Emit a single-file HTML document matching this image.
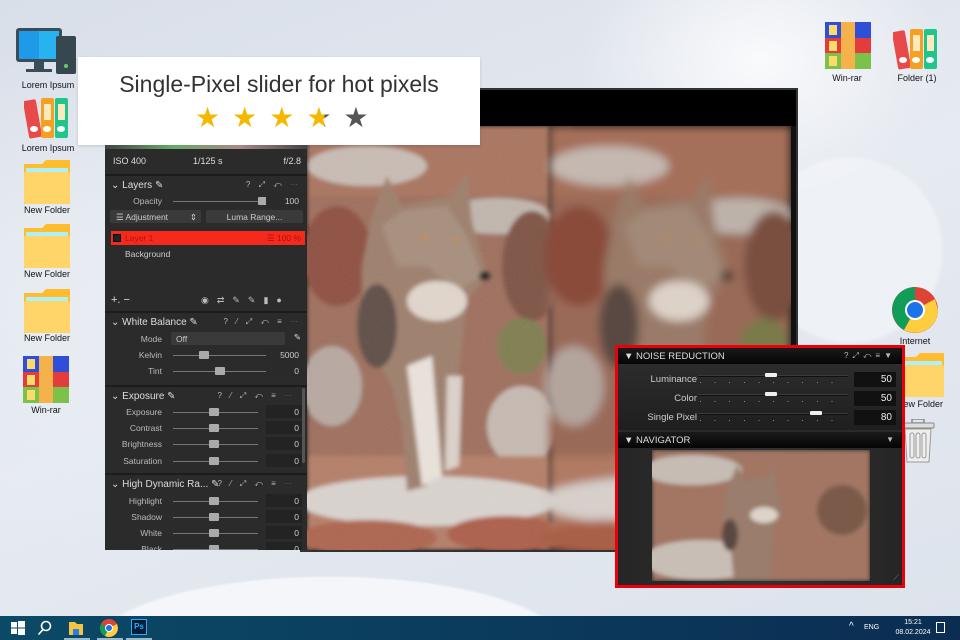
<!DOCTYPE html>
<html><head><meta charset="utf-8"><style>
*{margin:0;padding:0;box-sizing:border-box}
body{width:960px;height:640px;overflow:hidden;position:relative;font-family:"Liberation Sans",sans-serif;background:#e3e8f0}
.a{position:absolute}
.bg{left:0;top:0;width:960px;height:616px;background:
radial-gradient(ellipse 260px 200px at 760px 60px,rgba(255,255,255,.8),rgba(255,255,255,0) 70%),
radial-gradient(circle 95px at 850px 250px,#eef1f6 95%,rgba(0,0,0,0) 100%),
radial-gradient(ellipse 260px 80px at 330px 650px,#f4f6fa 90%,rgba(0,0,0,0) 93%),
radial-gradient(ellipse 300px 250px at 100px 300px,#e9edf3,rgba(0,0,0,0)),
linear-gradient(160deg,#d9dfe9,#e6eaf1 50%,#dde3ec)}
.lbl{font-size:9px;color:#111;text-align:center;width:80px}
.panel{left:105px;top:90px;width:202px;height:460px;background:#2b2b2b;color:#ccc;font-size:8.5px}
.hd{position:absolute;left:0;width:202px;height:18px;border-top:2px solid #1c1c1c;font-size:10px;color:#ddd;padding:4px 0 0 6px}
.hd .ic{position:absolute;right:6px;top:4px;font-size:8px;color:#bbb;letter-spacing:3px}
.row{position:absolute;left:0;width:202px;height:14px}
.row .l{position:absolute;right:145px;top:2px;text-align:right;color:#bbb}
.row .tr{position:absolute;left:68px;width:88px;top:7px;height:1px;background:#777}
.row .kn{position:absolute;top:3px;width:10px;height:8px;background:#aaa;border-radius:1px}
.row .v{position:absolute;right:5px;top:0;width:36px;height:13px;background:#232323;text-align:right;padding:2px 3px 0 0;color:#ccc}
.nr{font-size:9px;color:#ddd}
.nr .row2{position:absolute;left:0;width:284px;height:18px}
.nr .l{position:absolute;right:205px;top:3px;font-size:9.5px;color:#ccc}
.nr .tr{position:absolute;left:80px;width:150px;top:4px;height:2px;background:#3a3a3a;border-bottom:1px solid #111}
.nr .dots{position:absolute;left:82px;width:146px;top:11px;height:1px;background:repeating-linear-gradient(90deg,#888 0 1px,transparent 1px 14.6px)}
.nr .kn{position:absolute;top:2px;width:12px;height:4px;background:#eee;border-radius:1px}
.nr .v{position:absolute;right:6px;top:1px;width:42px;height:15px;background:#111;text-align:right;padding:2px 4px 0 0;font-size:10px;color:#eee}
</style></head><body>
<div class="a bg"></div>

<!-- left desktop icons -->
<svg class="a" style="left:16px;top:26px" width="62" height="52" viewBox="0 0 62 52"><rect x="0" y="2" width="46" height="34" rx="3" fill="#3a4d57"/><rect x="3" y="5" width="40" height="28" fill="#1e9ae8"/><rect x="23" y="5" width="20" height="28" fill="#27b3f0"/><rect x="18" y="36" width="10" height="8" fill="#3a4d57"/><rect x="10" y="43" width="26" height="3" fill="#3a4d57"/><rect x="40" y="10" width="20" height="38" rx="2" fill="#37474f"/><circle cx="50" cy="40" r="2" fill="#6c6"/></svg>
<div class="a lbl" style="left:8px;top:80px">Lorem Ipsum</div>
<svg class="a" style="left:24px;top:96px" width="48" height="44" viewBox="0 0 48 44"><rect x="2" y="4" width="13" height="38" rx="2" fill="#e84a4a" transform="rotate(-10 8 23)"/><rect x="17" y="2" width="13" height="40" rx="2" fill="#f5a020"/><rect x="31" y="2" width="13" height="40" rx="2" fill="#1fc58a"/><rect x="20" y="8" width="7" height="16" fill="#fde8c0"/><rect x="34" y="8" width="7" height="16" fill="#fde8c0"/><ellipse cx="23" cy="33" rx="4" ry="3" fill="#fff"/><ellipse cx="37" cy="33" rx="4" ry="3" fill="#fff"/><ellipse cx="10" cy="33" rx="4" ry="3" fill="#fff"/></svg>
<div class="a lbl" style="left:8px;top:143px">Lorem Ipsum</div>
<svg class="a" style="left:24px;top:160px" width="46" height="44" viewBox="0 0 46 44"><path d="M0 4h18l4 -4h24v44H0z" fill="#ffbd2e"/><rect x="2" y="8" width="42" height="6" fill="#aef0f5"/><rect x="0" y="12" width="46" height="32" rx="2" fill="#ffd56a"/></svg>
<div class="a lbl" style="left:7px;top:205px">New Folder</div>
<svg class="a" style="left:24px;top:224px" width="46" height="44" viewBox="0 0 46 44"><path d="M0 4h18l4 -4h24v44H0z" fill="#ffbd2e"/><rect x="2" y="8" width="42" height="6" fill="#aef0f5"/><rect x="0" y="12" width="46" height="32" rx="2" fill="#ffd56a"/></svg>
<div class="a lbl" style="left:7px;top:269px">New Folder</div>
<svg class="a" style="left:24px;top:289px" width="46" height="44" viewBox="0 0 46 44"><path d="M0 4h18l4 -4h24v44H0z" fill="#ffbd2e"/><rect x="2" y="8" width="42" height="6" fill="#aef0f5"/><rect x="0" y="12" width="46" height="32" rx="2" fill="#ffd56a"/></svg>
<div class="a lbl" style="left:7px;top:333px">New Folder</div>
<svg class="a" style="left:23px;top:356px" width="46" height="47" viewBox="0 0 46 47"><rect width="46" height="16" fill="#2f4fd8"/><rect y="16" width="46" height="15" fill="#e23c3c"/><rect y="31" width="46" height="16" fill="#7cc24a"/><rect x="16" width="14" height="47" fill="#f5b24a"/><rect x="4" y="3" width="8" height="10" fill="#fddb6a"/><rect x="4" y="19" width="8" height="10" fill="#fddb6a"/><rect x="4" y="34" width="8" height="10" fill="#fddb6a"/></svg>
<div class="a lbl" style="left:6px;top:405px">Win-rar</div>

<!-- right desktop icons -->
<svg class="a" style="left:825px;top:22px" width="46" height="47" viewBox="0 0 46 47"><rect width="46" height="16" fill="#2f4fd8"/><rect y="16" width="46" height="15" fill="#e23c3c"/><rect y="31" width="46" height="16" fill="#7cc24a"/><rect x="16" width="14" height="47" fill="#f5b24a"/><rect x="4" y="3" width="8" height="10" fill="#fddb6a"/><rect x="4" y="19" width="8" height="10" fill="#fddb6a"/><rect x="4" y="34" width="8" height="10" fill="#fddb6a"/></svg>
<div class="a lbl" style="left:807px;top:73px">Win-rar</div>
<svg class="a" style="left:893px;top:27px" width="48" height="44" viewBox="0 0 48 44"><rect x="2" y="4" width="13" height="38" rx="2" fill="#e84a4a" transform="rotate(-10 8 23)"/><rect x="17" y="2" width="13" height="40" rx="2" fill="#f5a020"/><rect x="31" y="2" width="13" height="40" rx="2" fill="#1fc58a"/><rect x="20" y="8" width="7" height="16" fill="#fde8c0"/><rect x="34" y="8" width="7" height="16" fill="#fde8c0"/><ellipse cx="23" cy="33" rx="4" ry="3" fill="#fff"/><ellipse cx="37" cy="33" rx="4" ry="3" fill="#fff"/><ellipse cx="10" cy="33" rx="4" ry="3" fill="#fff"/></svg>
<div class="a lbl" style="left:877px;top:73px">Folder (1)</div>
<svg class="a" style="left:892px;top:287px" width="46" height="46" viewBox="-23 -23 46 46"><circle r="23" fill="#db4437"/><path d="M0 0L-20 -11A23 23 0 0 0 -11 20Z" fill="#0f9d58"/><path d="M0 0L-11 20A23 23 0 0 0 23 0L20 -11Z" fill="#ffcd40"/><path d="M0 -23A23 23 0 0 0 -20 -11L0 0Z" fill="#0f9d58"/><circle r="10" fill="#fff"/><circle r="8" fill="#1a73e8"/></svg>
<div class="a lbl" style="left:875px;top:336px">Internet</div>
<svg class="a" style="left:898px;top:353px" width="46" height="44" viewBox="0 0 46 44"><path d="M0 4h18l4 -4h24v44H0z" fill="#ffbd2e"/><rect x="2" y="8" width="42" height="6" fill="#aef0f5"/><rect x="0" y="12" width="46" height="32" rx="2" fill="#ffd56a"/></svg>
<div class="a lbl" style="left:880px;top:399px">New Folder</div>
<svg class="a" style="left:901px;top:419px" width="34" height="44" viewBox="0 0 34 44"><rect x="11" y="0" width="12" height="4" fill="none" stroke="#888" stroke-width="1.5"/><rect x="1" y="4" width="32" height="5" rx="1" fill="#ddd" stroke="#888"/><path d="M4 10h26l-2 33H6z" fill="#eee" stroke="#999"/><rect x="9" y="14" width="4" height="25" rx="2" fill="none" stroke="#999"/><rect x="15" y="14" width="4" height="25" rx="2" fill="none" stroke="#999"/><rect x="21" y="14" width="4" height="25" rx="2" fill="none" stroke="#999"/></svg>

<!-- photo window -->
<div class="a" style="left:300px;top:88px;width:498px;height:464px;background:#111;border:2px solid #333"></div>
<div class="a" style="left:480px;top:90px;width:316px;height:36px;background:#000"></div>
<svg class="a" style="left:307px;top:126px" width="484" height="424" viewBox="0 0 484 424">
<defs>
<filter id="b1"><feGaussianBlur stdDeviation="2"/></filter>
<filter id="b2"><feGaussianBlur stdDeviation="4.5"/></filter>
<filter id="n"><feTurbulence type="fractalNoise" baseFrequency="0.9" numOctaves="1"/><feColorMatrix values="0 0 0 0 1  0 0 0 0 1  0 0 0 0 1  0 0 0 0.12 0"/></filter>
<g id="scene">
<rect width="242" height="424" fill="#9a6a58"/>
<rect y="0" width="242" height="70" fill="#a5705a"/>
<ellipse cx="60" cy="40" rx="60" ry="20" fill="#c4b8b0"/>
<ellipse cx="190" cy="90" rx="55" ry="18" fill="#bdb2aa"/>
<ellipse cx="30" cy="130" rx="35" ry="50" fill="#8a4c3a"/>
<ellipse cx="225" cy="140" rx="30" ry="55" fill="#7a5040"/>
<ellipse cx="215" cy="220" rx="25" ry="28" fill="#7a7a4c"/>
<ellipse cx="25" cy="260" rx="30" ry="40" fill="#b3a49c"/>
<ellipse cx="215" cy="300" rx="35" ry="40" fill="#c2b6ae"/>
<rect y="330" width="242" height="94" fill="#b07a64"/>
<ellipse cx="120" cy="375" rx="130" ry="25" fill="#d6cfca"/>
<ellipse cx="60" cy="412" rx="70" ry="18" fill="#a9604a"/>
<ellipse cx="200" cy="408" rx="60" ry="18" fill="#a85a45"/>
<path d="M65 90 L80 50 L95 80 L145 70 L160 45 L165 95 L180 150 L160 175 L150 260 L150 340 L135 350 L130 290 L115 300 L120 360 L100 365 L95 300 L85 260 L55 210 L55 140 Z" fill="#9a7a68"/>
<path d="M75 100 L95 85 L140 80 L160 110 L175 150 L150 165 L120 140 L90 140 Z" fill="#a38a78"/>
<ellipse cx="130" cy="175" rx="30" ry="20" fill="#ddd2c8"/>
<ellipse cx="70" cy="200" rx="20" ry="42" fill="#5a4a42"/>
<path d="M100 240 L125 230 L135 350 L115 360 Z" fill="#e6dfd8"/>
<path d="M140 250 L155 250 L152 340 L138 345 Z" fill="#d8cec6"/>
<ellipse cx="178" cy="150" rx="6" ry="5" fill="#222"/>
<circle cx="118" cy="112" r="2.5" fill="#c80"/><circle cx="148" cy="114" r="2" fill="#c80"/>
</g>
</defs>
<use href="#scene" filter="url(#b1)"/>
<rect width="242" height="424" filter="url(#n)"/>
<g transform="translate(242,0)"><use href="#scene" filter="url(#b2)"/></g>
</svg>

<!-- label box -->
<div class="a" style="left:78px;top:57px;width:402px;height:88px;background:#fff;box-shadow:0 1px 3px rgba(0,0,0,.15)"></div>
<div class="a" style="left:78px;top:71px;width:402px;text-align:center;font-size:23px;color:#333">Single-Pixel slider for hot pixels</div>
<div class="a" style="left:195px;top:103px;font-size:28px;letter-spacing:12px;color:#f5b800;line-height:30px">★★★<span style="background:linear-gradient(90deg,#f5b800 50%,#555 50%);-webkit-background-clip:text;color:transparent">★</span><span style="color:#555">★</span></div>

<!-- left panel -->
<div class="a panel" style="top:145px;height:405px">
<div class="a" style="left:0;top:0;width:202px;height:4px;background:linear-gradient(90deg,#444,#6a6,#a88,#444)"></div>
<div class="a" style="left:8px;top:11px;font-size:9px;color:#ddd">ISO 400</div>
<div class="a" style="left:88px;top:11px;font-size:9px;color:#ddd">1/125 s</div>
<div class="a" style="right:6px;top:11px;font-size:9px;color:#ddd">f/2.8</div>
<div class="hd" style="top:29px">⌄ Layers ✎<span class="ic">? ⤢ ↶ ⋯</span></div>
<div class="row" style="top:49px"><span class="l">Opacity</span><div class="tr" style="width:95px"></div><div class="kn" style="left:153px"></div><div class="v" style="background:#2a2a2a">100</div></div>
<div class="a" style="left:5px;top:65px;width:91px;height:13px;background:#3a3a3a;border-radius:2px;color:#ccc;padding:2px 0 0 6px">☰ Adjustment <span style="float:right;margin-right:4px">⇕</span></div>
<div class="a" style="left:101px;top:65px;width:97px;height:13px;background:#3a3a3a;border-radius:2px;color:#ccc;text-align:center;padding-top:2px">Luma Range...</div>
<div class="a" style="left:6px;top:86px;width:194px;height:14px;background:#f62a1c;color:#b11;padding:2px 0 0 14px">Layer 1<span style="position:absolute;right:4px;top:2px;color:#a11">☰ 100 %</span></div>
<div class="a" style="left:8px;top:89px;width:8px;height:8px;background:#222;border:1px solid #000"></div>
<div class="a" style="left:20px;top:104px;color:#ccc">Background</div>
<div class="a" style="left:6px;top:149px;color:#ddd;font-size:11px">+. −</div>
<div class="a" style="left:96px;top:150px;color:#bbb;font-size:9px;letter-spacing:8px">◉⇄✎✎▮●</div>
<div class="hd" style="top:166px">⌄ White Balance ✎<span class="ic">? ⁄ ⤢ ↶ ≡ ⋯</span></div>
<div class="row" style="top:187px"><span class="l">Mode</span><div class="a" style="left:66px;top:0;width:114px;height:13px;background:#3a3a3a;border-radius:2px;padding:2px 0 0 5px">Off</div><div class="a" style="right:6px;top:0;color:#ddd">✎</div></div>
<div class="row" style="top:203px"><span class="l">Kelvin</span><div class="tr" style="width:95px"></div><div class="kn" style="left:94px"></div><div class="v" style="background:#2a2a2a">5000</div></div>
<div class="row" style="top:219px"><span class="l">Tint</span><div class="tr" style="width:95px"></div><div class="kn" style="left:110px"></div><div class="v" style="background:#2a2a2a">0</div></div>
<div class="hd" style="top:240px">⌄ Exposure ✎<span class="ic" style="right:12px">? ⁄ ⤢ ↶ ≡ ⋯</span></div>
<div class="row" style="top:260px"><span class="l">Exposure</span><div class="tr" style="width:85px"></div><div class="kn" style="left:104px"></div><div class="v">0</div></div>
<div class="row" style="top:276px"><span class="l">Contrast</span><div class="tr" style="width:85px"></div><div class="kn" style="left:104px"></div><div class="v">0</div></div>
<div class="row" style="top:292px"><span class="l">Brightness</span><div class="tr" style="width:85px"></div><div class="kn" style="left:104px"></div><div class="v">0</div></div>
<div class="row" style="top:309px"><span class="l">Saturation</span><div class="tr" style="width:85px"></div><div class="kn" style="left:104px"></div><div class="v">0</div></div>
<div class="hd" style="top:328px">⌄ High Dynamic Ra... ✎<span class="ic" style="right:12px">? ⁄ ⤢ ↶ ≡ ⋯</span></div>
<div class="row" style="top:349px"><span class="l">Highlight</span><div class="tr" style="width:85px"></div><div class="kn" style="left:104px"></div><div class="v">0</div></div>
<div class="row" style="top:365px"><span class="l">Shadow</span><div class="tr" style="width:85px"></div><div class="kn" style="left:104px"></div><div class="v">0</div></div>
<div class="row" style="top:381px"><span class="l">White</span><div class="tr" style="width:85px"></div><div class="kn" style="left:104px"></div><div class="v">0</div></div>
<div class="row" style="top:397px;height:8px;overflow:hidden"><span class="l">Black</span><div class="tr" style="width:85px"></div><div class="kn" style="left:104px"></div><div class="v">0</div></div>
<div class="a" style="left:197px;top:243px;width:3px;height:75px;background:#555;border-radius:2px"></div>
</div>

<!-- noise reduction panel -->
<div class="a nr" style="left:615px;top:345px;width:290px;height:243px;border:3px solid #e8000a;background:#2a2a2a">
<div class="a" style="left:0;top:0;width:284px;height:16px;background:linear-gradient(#1a1a1a,#050505);padding:3px 0 0 6px;font-size:9.5px;color:#ddd">▼ NOISE REDUCTION<span style="position:absolute;right:6px;top:3px;font-size:8px;letter-spacing:4px;color:#bbb">?⤢↶≡▼</span></div>
<div class="a" style="left:0;top:16px;width:284px;height:66px;background:linear-gradient(#2c2c2c,#1f1f1f)"></div>
<div class="row2" style="top:23px"><span class="l">Luminance</span><div class="tr"></div><div class="dots"></div><div class="kn" style="left:147px"></div><div class="v">50</div></div>
<div class="row2" style="top:42px"><span class="l">Color</span><div class="tr"></div><div class="dots"></div><div class="kn" style="left:147px"></div><div class="v">50</div></div>
<div class="row2" style="top:61px"><span class="l">Single Pixel</span><div class="tr"></div><div class="dots"></div><div class="kn" style="left:192px"></div><div class="v">80</div></div>
<div class="a" style="left:0;top:84px;width:284px;height:16px;background:linear-gradient(#1a1a1a,#050505);padding:3px 0 0 6px;font-size:9.5px;color:#ddd">▼ NAVIGATOR<span style="position:absolute;right:8px;top:3px;font-size:8px;color:#bbb">▼</span></div>
<div class="a" style="left:0;top:100px;width:284px;height:137px;background:linear-gradient(90deg,#252525,#333 50%,#252525)"></div>
<svg class="a" style="left:34px;top:102px" width="218" height="131" viewBox="0 0 218 131">
<defs><filter id="b3"><feGaussianBlur stdDeviation="2"/></filter></defs>
<g filter="url(#b3)">
<rect width="218" height="131" fill="#a27664"/>
<ellipse cx="40" cy="20" rx="50" ry="15" fill="#c6bcb4"/>
<ellipse cx="50" cy="110" rx="60" ry="20" fill="#c9beb6"/>
<ellipse cx="190" cy="60" rx="25" ry="25" fill="#7b5a48"/>
<path d="M75 40 L85 15 L92 30 L115 28 L122 12 L125 40 L132 62 L122 75 L118 131 L82 131 L78 90 L70 70 Z" fill="#9a7d6c"/>
<ellipse cx="112" cy="65" rx="14" ry="8" fill="#ddd3c9"/>
<ellipse cx="78" cy="85" rx="8" ry="16" fill="#5a4a42"/>
</g></svg>
<div class="a" style="right:3px;bottom:2px;color:#777;font-size:8px">⟋</div>
</div>

<!-- taskbar -->
<div class="a" style="left:0;top:616px;width:960px;height:24px;background:linear-gradient(90deg,#0b4a66,#0b3d5e 45%,#0b2d52)"></div>
<svg class="a" style="left:11px;top:621px" width="14" height="14" viewBox="0 0 14 14" fill="#fff"><rect x="0" y="1" width="6" height="5.5"/><rect x="7" y="0" width="7" height="6.5"/><rect x="0" y="7.5" width="6" height="5.5"/><rect x="7" y="7.5" width="7" height="6.5"/></svg>
<svg class="a" style="left:37px;top:620px" width="16" height="16" viewBox="0 0 16 16" fill="none" stroke="#fff" stroke-width="1.6"><circle cx="9" cy="6" r="4.5"/><path d="M6 9.5L1.5 14.5"/></svg>
<svg class="a" style="left:68px;top:620px" width="16" height="16" viewBox="0 0 16 16"><path d="M1 2h6l2 2h6v11H1z" fill="#f6c443"/><rect x="5" y="9" width="6" height="6" fill="#2a7ee0"/></svg>
<svg class="a" style="left:100px;top:619px" width="18" height="18" viewBox="-9 -9 18 18"><circle r="9" fill="#db4437"/><path d="M0 0L-8 -4A9 9 0 0 0 -4 8Z" fill="#0f9d58"/><path d="M0 0L-4 8A9 9 0 0 0 9 0L8 -4Z" fill="#ffcd40"/><circle r="4" fill="#fff"/><circle r="3" fill="#1a73e8"/></svg>
<div class="a" style="left:131px;top:619px;width:16px;height:16px;background:#001e36;border:1px solid #31a8ff;color:#31a8ff;font-size:8px;font-weight:bold;text-align:center;line-height:14px">Ps</div>
<div class="a" style="left:64px;top:638px;width:26px;height:2px;background:#9bc"></div>
<div class="a" style="left:97px;top:638px;width:26px;height:2px;background:#9bc"></div>
<div class="a" style="left:126px;top:638px;width:26px;height:2px;background:#9bc"></div>
<div class="a" style="left:849px;top:621px;color:#fff;font-size:10px">^</div>
<div class="a" style="left:864px;top:624px;color:#fff;font-size:7px">ENG</div>
<div class="a" style="left:893px;top:618px;width:40px;text-align:center;color:#fff;font-size:7px;line-height:10px">15:21<br>08.02.2024</div>
<div class="a" style="left:936px;top:622px;width:9px;height:11px;border:1px solid #fff"></div>
</body></html>
